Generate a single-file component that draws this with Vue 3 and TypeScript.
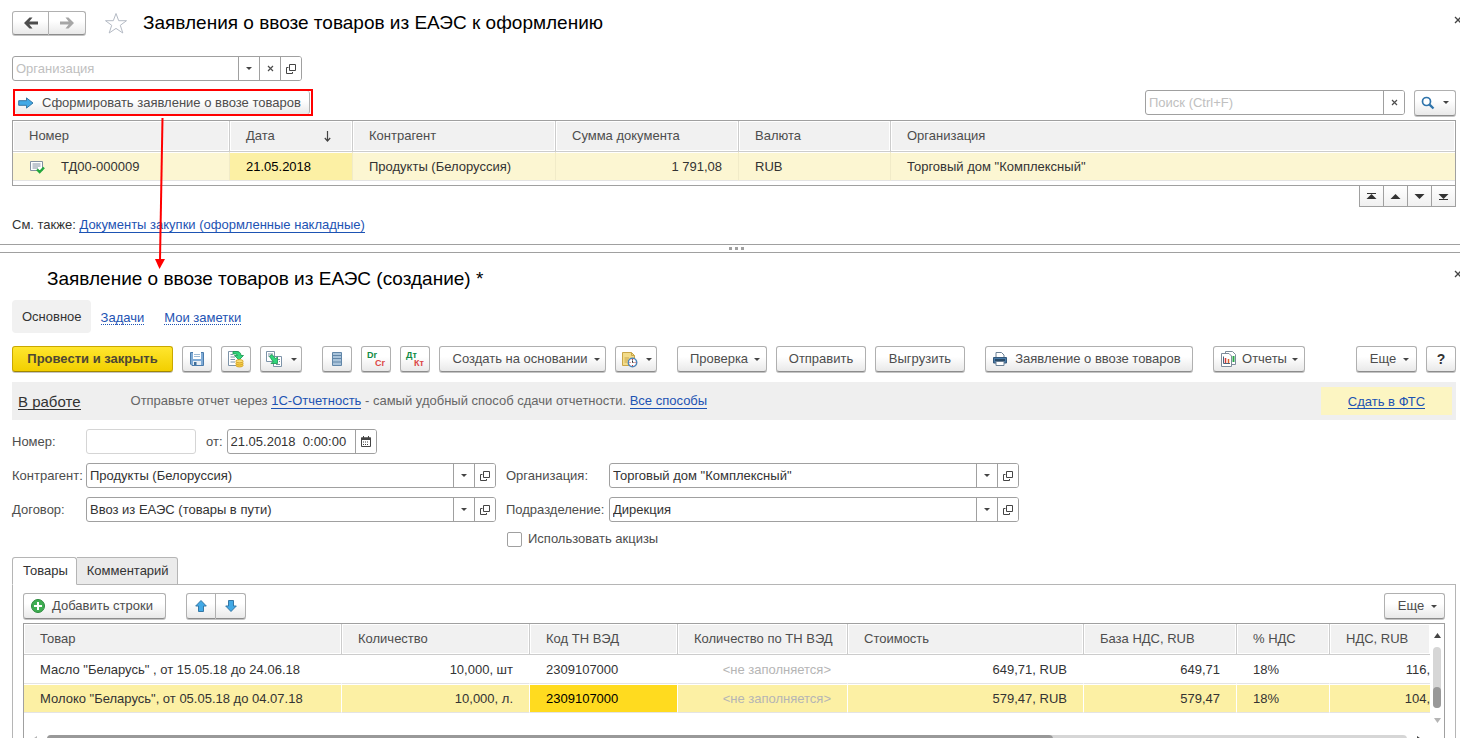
<script setup lang="ts">
import { ref } from 'vue'

interface ImportDoc {
  number: string
  date: string
  partner: string
  sum: string
  currency: string
  company: string
}

interface GoodsLine {
  name: string
  qty: string
  code: string
  cost: string
  base: string
  rate: string
  vat: string
}

const docs: ImportDoc[] = [
  {
    number: 'ТД00-000009',
    date: '21.05.2018',
    partner: 'Продукты (Белоруссия)',
    sum: '1 791,08',
    currency: 'RUB',
    company: 'Торговый дом "Комплексный"',
  },
]

const goods: GoodsLine[] = [
  { name: 'Масло "Беларусь" , от 15.05.18 до 24.06.18', qty: '10,000, шт', code: '2309107000', cost: '649,71, RUB', base: '649,71', rate: '18%', vat: '116,' },
  { name: 'Молоко "Беларусь", от 05.05.18 до 04.07.18', qty: '10,000, л.', code: '2309107000', cost: '579,47, RUB', base: '579,47', rate: '18%', vat: '104,' },
]

const selected = ref(1)
const filterCompany = ref('')
const search = ref('')
const docNumber = ref('')
const docDate = ref('21.05.2018  0:00:00')
const partner = ref('Продукты (Белоруссия)')
const contract = ref('Ввоз из ЕАЭС (товары в пути)')
const company = ref('Торговый дом "Комплексный"')
const department = ref('Дирекция')
const excise = ref(false)
</script>

<template>
  <div class="page">
    <section class="pane top-pane">
      <header class="title-row">
        <div class="btn-pair nav-pair">
          <button type="button" class="btn" aria-label="Назад">
            <svg width="16" height="12" viewBox="0 0 16 12"><path d="M1 6 L6.500 .5 H9.500 L6.300 4.500 H15 V7.500 H6.300 L9.500 11.500 H6.500 Z" fill="#4d4d4d" /></svg>
          </button>
          <button type="button" class="btn" aria-label="Вперед">
            <svg width="16" height="12" viewBox="0 0 16 12"><path d="M15 6 L9.500 .5 H6.500 L9.700 4.500 H1 V7.500 H9.700 L6.500 11.500 H9.500 Z" fill="#a6a6a6" /></svg>
          </button>
        </div>
        <button type="button" class="plain star" aria-label="Избранное">
          <svg width="24" height="23" viewBox="0 0 24 23"><path d="M12 1.500 L14.700 8.700 H22.500 L16.300 13.300 L18.800 21 L12 16.400 L5.200 21 L7.700 13.300 L1.500 8.700 H9.300 Z" fill="#fff" stroke="#b4bac4" /></svg>
        </button>
        <h1>Заявления о ввозе товаров из ЕАЭС к оформлению</h1>
        <button type="button" class="plain close" aria-label="Закрыть">
          <svg width="8" height="8" viewBox="0 0 8 8"><path d="M1 1 L7 7 M7 1 L1 7" stroke="#444" stroke-width="1.300" /></svg>
        </button>
      </header>

      <div class="field filter">
        <input v-model="filterCompany" type="text" placeholder="Организация" aria-label="Организация" />
        <button type="button" aria-label="Выбрать"><i class="caret"></i></button>
        <button type="button" aria-label="Очистить">
          <svg width="7" height="7" viewBox="0 0 7 7"><path d="M1 1 L6 6 M6 1 L1 6" stroke="#4d4d4d" stroke-width="1.200" /></svg>
        </button>
        <button type="button" aria-label="Открыть">
          <svg width="10" height="10" viewBox="0 0 10 10"><path d="M3.500 .5 H9.500 V6.500 H3.500 Z M2.500 3.500 H.5 V9.500 H6.500 V8" fill="none" stroke="#444" /></svg>
        </button>
      </div>

      <div class="command-row">
        <div class="marked">
          <button type="button" class="btn form-btn">
            <svg width="16" height="12" viewBox="0 0 16 12"><path d="M.7 3.700 H8.500 V.9 L15 6 L8.500 11.100 V8.300 H.7 Z" fill="#41a9e6" stroke="#3477a5" /></svg>
            Сформировать заявление о ввозе товаров
          </button>
        </div>
        <div class="field search">
          <input v-model="search" type="text" placeholder="Поиск (Ctrl+F)" aria-label="Поиск" />
          <button type="button" aria-label="Очистить поиск">
            <svg width="7" height="7" viewBox="0 0 7 7"><path d="M1 1 L6 6 M6 1 L1 6" stroke="#4d4d4d" stroke-width="1.200" /></svg>
          </button>
        </div>
        <button type="button" class="btn icon-drop" aria-label="Найти">
          <svg width="14" height="14" viewBox="0 0 14 14"><circle cx="5.500" cy="5.500" r="4" fill="#fff" stroke="#2f74ab" stroke-width="1.700" /><path d="M8.600 8.600 L12.500 12.500" stroke="#2f74ab" stroke-width="2.300" /></svg>
          <i class="caret"></i>
        </button>
      </div>

      <table class="grid docs">
        <colgroup>
          <col class="c-num" /><col class="c-date" /><col class="c-partner" /><col class="c-sum" /><col class="c-cur" /><col />
        </colgroup>
        <thead>
          <tr>
            <th>Номер</th>
            <th>
              <span class="sorted">Дата
                <svg width="7" height="11" viewBox="0 0 7 11"><path d="M3.500 0 V10 M.8 7 L3.500 10 L6.200 7" fill="none" stroke="#444" stroke-width="1.200" /></svg>
              </span>
            </th>
            <th>Контрагент</th>
            <th>Сумма документа</th>
            <th>Валюта</th>
            <th>Организация</th>
          </tr>
        </thead>
        <tbody>
          <tr v-for="d in docs" :key="d.number">
            <td>
              <span class="doc-num">
                <svg width="16" height="14" viewBox="0 0 16 14"><path d="M1.500 1.500 H13.500 V10.500 H1.500 Z" fill="#fff" stroke="#8390a0" /><path d="M3.500 4 H11.500 M3.500 6 H11.500 M3.500 8 H9" stroke="#8390a0" /><path d="M8 9.300 L10.700 12 L15 7.500" fill="none" stroke="#23a83c" stroke-width="2.400" /></svg>
                {{ d.number }}
              </span>
            </td>
            <td class="current">{{ d.date }}</td>
            <td>{{ d.partner }}</td>
            <td class="num">{{ d.sum }}</td>
            <td>{{ d.currency }}</td>
            <td>{{ d.company }}</td>
          </tr>
        </tbody>
      </table>

      <div class="pager">
        <button type="button" aria-label="В начало"><svg width="11" height="7" viewBox="0 0 11 7"><path d="M1 .5 H10" stroke="#333" /><path d="M5.500 1 L10.500 6 H.5 Z" fill="#333" /></svg></button>
        <button type="button" aria-label="Вверх"><svg width="11" height="7" viewBox="0 0 11 7"><path d="M5.500 1 L10.500 6 H.5 Z" fill="#333" /></svg></button>
        <button type="button" aria-label="Вниз"><svg width="11" height="7" viewBox="0 0 11 7"><path d="M5.500 6 L10.500 1 H.5 Z" fill="#333" /></svg></button>
        <button type="button" aria-label="В конец"><svg width="11" height="7" viewBox="0 0 11 7"><path d="M1 6.500 H10" stroke="#333" /><path d="M5.500 6 L10.500 1 H.5 Z" fill="#333" /></svg></button>
      </div>

      <p class="see-also">См. также: <a href="#">Документы закупки (оформленные накладные)</a></p>
    </section>

    <div class="splitter"><i></i><i></i><i></i></div>

    <section class="pane bottom-pane">
      <header class="title-row second">
        <h1>Заявление о ввозе товаров из ЕАЭС (создание) *</h1>
        <button type="button" class="plain close" aria-label="Закрыть">
          <svg width="8" height="8" viewBox="0 0 8 8"><path d="M1 1 L7 7 M7 1 L1 7" stroke="#444" stroke-width="1.300" /></svg>
        </button>
      </header>

      <nav class="sections">
        <span class="here">Основное</span>
        <a href="#">Задачи</a>
        <a href="#">Мои заметки</a>
      </nav>

      <div class="toolbar">
        <div class="group">
          <button type="button" class="btn primary">Провести и закрыть</button>
          <button type="button" class="btn square" aria-label="Записать">
            <svg width="16" height="16" viewBox="0 0 16 16"><path d="M1.500 1.500 H14.500 V14.500 H3 L1.500 13 Z" fill="#7fabd6" stroke="#4a7bab" /><path d="M4 1 H12 V8 H4 Z" fill="#fff" /><path d="M5 3.500 H11 M5 5.500 H11" stroke="#9db9d3" /><path d="M4 10 H12 V14 H4 Z" fill="#e8eef4" /><path d="M5 11 H7.500 V14 H5 Z" fill="#3f6e99" /></svg>
          </button>
          <button type="button" class="btn square" aria-label="Провести">
            <svg width="18" height="18" viewBox="0 0 18 18"><path d="M1.500 1.500 H11.500 V15.500 H1.500 Z" fill="#fff" stroke="#7d93a8" /><path d="M3.500 4.500 H6 M3.500 7 H8 M3.500 9.500 H8 M3.500 12 H8" stroke="#7d93a8" /><path d="M6 1.500 H9 Q14 1.500 14 5.500 H16.500 L12 10 L7.500 5.500 H10.500 Q10.500 4 8.500 4 H6 Z" fill="#31d47b" stroke="#15934b" stroke-width=".8" /><ellipse cx="12.500" cy="15.200" rx="3.700" ry="1.800" fill="#f6cf4b" stroke="#cf9c20" stroke-width=".8" /><ellipse cx="12.500" cy="13.200" rx="3.700" ry="1.800" fill="#f6cf4b" stroke="#cf9c20" stroke-width=".8" /><ellipse cx="12.500" cy="11.200" rx="3.700" ry="1.600" fill="#fbe07a" stroke="#cf9c20" stroke-width=".8" /></svg>
          </button>
          <button type="button" class="btn icon-drop" aria-label="Создать копию">
            <svg width="18" height="18" viewBox="0 0 18 18"><path d="M1.500 1.500 H9.500 V11.500 H1.500 Z" fill="#fff" stroke="#7d93a8" /><path d="M3 4 H8 M3 6 H6" stroke="#7d93a8" /><path d="M8.500 6.500 H16.500 V16.500 H8.500 Z" fill="#fff" stroke="#7d93a8" /><path d="M13 9.500 H15 M14 11.500 H15 M11 14.500 H15" stroke="#7d93a8" /><path d="M4.500 6.500 L7 4.500 L10.500 8.500 L12.500 7 V13.500 H6 L8 11.500 Z" fill="#31d47b" stroke="#15934b" stroke-width=".8" /></svg>
            <i class="caret"></i>
          </button>
        </div>
        <div class="group">
          <button type="button" class="btn square" aria-label="Реестр">
            <svg width="12" height="16" viewBox="0 0 12 16"><path d="M1.500 1.500 H10.500 V14.500 H1.500 Z" fill="#a9c3da" stroke="#6186a8" /><path d="M1.500 4.500 H10.500 M1.500 7.500 H10.500 M1.500 11 H10.500" stroke="#6186a8" /></svg>
          </button>
          <button type="button" class="btn square entries"><span class="debit">Dr</span><span class="credit">Cr</span></button>
          <button type="button" class="btn square entries"><span class="debit">Дт</span><span class="credit">Кт</span></button>
          <button type="button" class="btn w-create">Создать на основании <i class="caret"></i></button>
          <button type="button" class="btn icon-drop" aria-label="Напоминание">
            <svg width="17" height="17" viewBox="0 0 17 17"><path d="M1.500 1.500 H10.500 L13.500 4.500 V14.500 H1.500 Z" fill="#f3dc8a" stroke="#c9a648" /><path d="M10.500 1.500 V4.500 H13.500 M3.500 7 H8 M3.500 9 H7 M3.500 11 H6" fill="none" stroke="#c9a648" /><circle cx="11.500" cy="11.500" r="4.200" fill="#fff" stroke="#4f84b6" stroke-width="1.500" /><path d="M11.500 11.500 V9.500 M11.500 11.500 H12.500" fill="none" stroke="#333" /><path d="M11 8.500 H12 M11 14.500 H12 M8.500 11.500 H9.500 M13.500 11.500 H14.500" stroke="#d43b3b" /></svg>
            <i class="caret"></i>
          </button>
        </div>
        <div class="group">
          <button type="button" class="btn w-90 checks">Проверка <i class="caret"></i></button>
          <button type="button" class="btn w-90">Отправить</button>
          <button type="button" class="btn w-90">Выгрузить</button>
        </div>
        <div class="group">
          <button type="button" class="btn w-print">
            <svg width="16" height="16" viewBox="0 0 16 16"><path d="M4 7 V1.500 H9.500 L12 4 V7" fill="#fff" stroke="#6d8296" /><path d="M1.500 6.500 H14.500 V12 H1.500 Z" fill="#4a7ba8" stroke="#34597c" /><path d="M3 9 H13" stroke="#1f3b55" stroke-width="1.500" /><path d="M4 10.500 H12 V14.500 H4 Z" fill="#fff" stroke="#6d8296" /></svg>
            Заявление о ввозе товаров
          </button>
        </div>
        <div class="group">
          <button type="button" class="btn w-reports">
            <svg width="17" height="18" viewBox="0 0 17 18"><path d="M5.500 1.500 H12.500 L15.500 4.500 V14.500 H5.500 Z" fill="#fff" stroke="#7d8b9a" /><path d="M13.500 6 V12" stroke="#2aa84a" stroke-width="2" /><path d="M1.500 3.500 H9 L11.500 6 V16.500 H1.500 Z" fill="#fff" stroke="#7d8b9a" /><path d="M3.500 6.500 V13.500 H10" fill="none" stroke="#4b637a" /><path d="M5.500 8 V13" stroke="#d53a3a" stroke-width="1.500" /><path d="M8.500 9 V13" stroke="#d9622b" stroke-width="1.500" /></svg>
            Отчеты <i class="caret"></i>
          </button>
        </div>
        <div class="group far">
          <button type="button" class="btn w-more">Еще <i class="caret"></i></button>
          <button type="button" class="btn square help">?</button>
        </div>
      </div>

      <div class="status">
        <a href="#" class="state">В работе</a>
        <p>Отправьте отчет через <a href="#">1С-Отчетность</a> - самый удобный способ сдачи отчетности. <a href="#">Все способы</a></p>
        <div class="submit"><a href="#">Сдать в ФТС</a></div>
      </div>

      <div class="form">
        <label for="f-number">Номер:</label>
        <div class="number-row">
          <div class="field muted number"><input id="f-number" v-model="docNumber" type="text" /></div>
          <label for="f-date">от:</label>
          <div class="field date">
            <input id="f-date" v-model="docDate" type="text" />
            <button type="button" aria-label="Календарь">
              <svg width="10" height="11" viewBox="0 0 10 11"><path d="M.5 2 H9.500 V10.500 H.5 Z" fill="#fff" stroke="#444" /><path d="M0 1.500 H10 V4 H0 Z" fill="#444" /><path d="M2.500 0 V2 M7.500 0 V2" stroke="#444" /><path d="M2 6 H8 M2 8.500 H8" stroke="#444" stroke-dasharray="1 1" /></svg>
            </button>
          </div>
        </div>

        <label for="f-partner">Контрагент:</label>
        <div class="field">
          <input id="f-partner" v-model="partner" type="text" />
          <button type="button" aria-label="Выбрать"><i class="caret"></i></button>
          <button type="button" aria-label="Открыть"><svg width="10" height="10" viewBox="0 0 10 10"><path d="M3.500 .5 H9.500 V6.500 H3.500 Z M2.500 3.500 H.5 V9.500 H6.500 V8" fill="none" stroke="#444" /></svg></button>
        </div>
        <label for="f-company" class="right-label">Организация:</label>
        <div class="field">
          <input id="f-company" v-model="company" type="text" />
          <button type="button" aria-label="Выбрать"><i class="caret"></i></button>
          <button type="button" aria-label="Открыть"><svg width="10" height="10" viewBox="0 0 10 10"><path d="M3.500 .5 H9.500 V6.500 H3.500 Z M2.500 3.500 H.5 V9.500 H6.500 V8" fill="none" stroke="#444" /></svg></button>
        </div>

        <label for="f-contract">Договор:</label>
        <div class="field">
          <input id="f-contract" v-model="contract" type="text" />
          <button type="button" aria-label="Выбрать"><i class="caret"></i></button>
          <button type="button" aria-label="Открыть"><svg width="10" height="10" viewBox="0 0 10 10"><path d="M3.500 .5 H9.500 V6.500 H3.500 Z M2.500 3.500 H.5 V9.500 H6.500 V8" fill="none" stroke="#444" /></svg></button>
        </div>
        <label for="f-department" class="right-label">Подразделение:</label>
        <div class="field">
          <input id="f-department" v-model="department" type="text" />
          <button type="button" aria-label="Выбрать"><i class="caret"></i></button>
          <button type="button" aria-label="Открыть"><svg width="10" height="10" viewBox="0 0 10 10"><path d="M3.500 .5 H9.500 V6.500 H3.500 Z M2.500 3.500 H.5 V9.500 H6.500 V8" fill="none" stroke="#444" /></svg></button>
        </div>

        <label class="check"><input v-model="excise" type="checkbox" />Использовать акцизы</label>
      </div>

      <div class="tabs" role="tablist">
        <button type="button" role="tab" class="tab active" aria-selected="true">Товары</button>
        <button type="button" role="tab" class="tab" aria-selected="false">Комментарий</button>
      </div>

      <div class="panel">
        <div class="panel-bar">
          <button type="button" class="btn w-add">
            <svg width="16" height="16" viewBox="0 0 16 16"><circle cx="8" cy="8" r="6.500" fill="#3fae52" stroke="#2a8a3c" /><path d="M8 4 V12 M4 8 H12" stroke="#fff" stroke-width="2" /></svg>
            Добавить строки
          </button>
          <div class="btn-pair">
            <button type="button" class="btn" aria-label="Выше"><svg width="14" height="14" viewBox="0 0 14 14"><path d="M7 1.500 L12.300 7 H9.500 V12.500 H4.500 V7 H1.700 Z" fill="#41a9e6" stroke="#3477a5" /></svg></button>
            <button type="button" class="btn" aria-label="Ниже"><svg width="14" height="14" viewBox="0 0 14 14"><path d="M7 12.500 L12.300 7 H9.500 V1.500 H4.500 V7 H1.700 Z" fill="#41a9e6" stroke="#3477a5" /></svg></button>
          </div>
          <button type="button" class="btn w-more far">Еще <i class="caret"></i></button>
        </div>

        <div class="frame">
          <div class="viewport">
            <table class="grid goods">
              <colgroup>
                <col class="g-name" /><col class="g-qty" /><col class="g-code" /><col class="g-tn" /><col class="g-cost" /><col class="g-base" /><col class="g-rate" /><col />
              </colgroup>
              <thead>
                <tr>
                  <th>Товар</th>
                  <th>Количество</th>
                  <th>Код ТН ВЭД</th>
                  <th>Количество по ТН ВЭД</th>
                  <th>Стоимость</th>
                  <th>База НДС, RUB</th>
                  <th>% НДС</th>
                  <th>НДС, RUB</th>
                </tr>
              </thead>
              <tbody>
                <tr v-for="(g, i) in goods" :key="g.name" :class="{ selected: i === selected }" @click="selected = i">
                  <td>{{ g.name }}</td>
                  <td class="num">{{ g.qty }}</td>
                  <td class="code">{{ g.code }}</td>
                  <td class="num blank">&lt;не заполняется&gt;</td>
                  <td class="num">{{ g.cost }}</td>
                  <td class="num">{{ g.base }}</td>
                  <td>{{ g.rate }}</td>
                  <td class="num">{{ g.vat }}</td>
                </tr>
              </tbody>
            </table>
          </div>
          <div class="vscroll">
            <svg width="7" height="5" viewBox="0 0 7 5"><path d="M3.500 0 L7 5 H0 Z" fill="#444" /></svg>
            <div class="vtrack"><div class="vthumb"></div></div>
            <svg width="7" height="5" viewBox="0 0 7 5"><path d="M3.500 5 L7 0 H0 Z" fill="#b5b5b5" /></svg>
          </div>
          <div class="hscroll">
            <svg width="5" height="7" viewBox="0 0 5 7"><path d="M0 3.500 L5 0 V7 Z" fill="#b5b5b5" /></svg>
            <div class="htrack"><div class="hthumb"></div></div>
            <svg width="5" height="7" viewBox="0 0 5 7"><path d="M5 3.500 L0 0 V7 Z" fill="#444" /></svg>
          </div>
        </div>
      </div>
    </section>

    <svg class="pointer" width="12" height="152" viewBox="0 0 12 152">
      <path d="M8.500 0 L6 142" stroke="#f00" stroke-width="2" />
      <path d="M1 141 H11 L5.500 151 Z" fill="#f00" />
    </svg>
  </div>
</template>

<style>
body {
  background: #fff;
}
</style>

<style scoped>
.page {
  position: relative;
  height: 100vh;
  overflow: hidden;
  color: #333;
  font: 13px/16px "Liberation Sans", Arial, sans-serif;
}
.page *, .page *::before {
  box-sizing: border-box;
}
button, input {
  margin: 0;
  font: inherit;
  color: inherit;
}
svg {
  display: block;
  flex: none;
}
p {
  margin: 0;
}
a {
  color: #1d53b3;
  text-decoration: none;
  border-bottom: 1px solid currentColor;
}
.pane {
  padding: 0 4px 0 12px;
}
h1 {
  margin: 0;
  font-size: 19px;
  font-weight: 400;
  line-height: 24px;
  color: #000;
}

/* buttons */
.btn {
  display: flex;
  align-items: center;
  justify-content: center;
  height: 26px;
  padding: 0;
  border: 1px solid #b0b0b0;
  border-bottom-color: #8c8c8c;
  border-radius: 3px;
  background: linear-gradient(#fff 40%, #e9e9e9);
  box-shadow: 0 1px 0 #c4c4c4;
  color: #4d4d4d;
  white-space: nowrap;
  flex: none;
}
.plain {
  padding: 0;
  border: 0;
  background: none;
}
.caret {
  flex: none;
  border: 3px solid transparent;
  border-top-color: #444;
  border-bottom: 0;
}
.btn-pair {
  display: flex;
}
.btn-pair .btn {
  width: 30px;
}
.btn-pair .btn:first-child {
  border-radius: 3px 0 0 3px;
}
.btn-pair .btn:last-child {
  border-left: 0;
  border-radius: 0 3px 3px 0;
}
.btn-pair.nav-pair .btn {
  width: 37px;
  height: 24px;
}
.square {
  width: 30px;
}
.icon-drop {
  width: 42px;
  gap: 8px;
}

/* fields */
.field {
  display: flex;
  height: 25px;
  border: 1px solid #a0a0a0;
  border-radius: 3px;
  background: #fff;
  overflow: hidden;
}
.field input {
  flex: 1;
  min-width: 0;
  padding: 0 3px;
  border: 0;
  outline: 0;
  background: none;
  color: #333;
}
.field input::placeholder {
  color: #c0c0c0;
}
.field button {
  display: flex;
  align-items: center;
  justify-content: center;
  flex: none;
  width: 21px;
  padding: 0;
  border: 0;
  border-left: 1px solid #a0a0a0;
  background: #fff;
}
.field.muted {
  border-color: #d5d5d5;
}

/* list form */
.title-row {
  display: flex;
  align-items: center;
  height: 46px;
}
.star {
  margin: 0 15px 0 18px;
}
.close {
  margin-left: auto;
  margin-right: -6px;
  padding-bottom: 6px;
}
.filter {
  width: 290px;
  margin-top: 10px;
}
.command-row {
  display: flex;
  align-items: center;
  height: 27px;
  margin-top: 8px;
}
.marked {
  width: 300px;
  height: 27px;
  margin-left: 1px;
  border: 2px solid #f00;
}
.form-btn {
  justify-content: flex-start;
  width: 295px;
  height: 23px;
  padding-left: 3px;
  gap: 8px;
  border-width: 0 1px 0 0;
  box-shadow: none;
}
.search {
  width: 260px;
  margin-left: auto;
  margin-right: 9px;
}
.grid {
  width: 100%;
  border-collapse: separate;
  border-spacing: 0;
  table-layout: fixed;
}
.grid th, .grid td {
  padding: 0 16px;
  font-weight: 400;
  text-align: left;
  white-space: nowrap;
  overflow: hidden;
}
.grid th {
  height: 31px;
  border-right: 1px solid #ccc;
  border-bottom: 1px solid #ccc;
  background: #f1f1f1;
  box-shadow: inset 0 0 0 1px #fff;
  color: #4d4d4d;
}
.grid td {
  height: 29px;
  padding-top: 2px;
  border-right: 1px solid #fff;
  border-bottom: 1px solid #e4e4e4;
  box-shadow: inset 0 1px 0 #fff;
}
.grid th:last-child, .grid td:last-child {
  border-right: 0;
}
.grid .num {
  text-align: right;
}
.docs {
  margin-top: 4px;
  padding-bottom: 4px;
  border: 1px solid #a0a0a0;
}
.docs td {
  border-right-color: #f1ebc8;
  background: #fcf6d2;
}
.docs td.current {
  background: #fcf0a4;
  color: #000;
}
.c-num { width: 217px; }
.c-date { width: 123px; }
.c-partner { width: 203px; }
.c-sum { width: 183px; }
.c-cur { width: 152px; }
.sorted {
  display: flex;
  align-items: center;
  justify-content: space-between;
  padding-right: 5px;
}
.doc-num {
  display: flex;
  align-items: center;
  gap: 16px;
}
.pager {
  display: flex;
  justify-content: flex-end;
  margin-top: -1px;
}
.pager button {
  display: flex;
  align-items: center;
  justify-content: center;
  width: 24px;
  height: 22px;
  padding: 0;
  border: 1px solid #a0a0a0;
  border-right: 0;
  background: linear-gradient(#fff, #f0f0f0);
}
.pager button:last-child {
  width: 25px;
  border-right: 1px solid #a0a0a0;
}
.see-also {
  margin-top: 10px;
  padding-bottom: 11px;
}
.splitter {
  display: flex;
  align-items: center;
  justify-content: center;
  gap: 3px;
  height: 9px;
  padding-left: 12px;
  border: 1px solid #a0a0a0;
  border-width: 1px 0;
}
.splitter i {
  width: 3px;
  height: 3px;
  background: #a0a0a0;
}

/* document form */
.title-row.second {
  height: 47px;
  padding-left: 35px;
}
.second h1 {
  padding-top: 4px;
}
.sections {
  display: flex;
  align-items: center;
  gap: 20px;
}
.sections .here {
  margin-right: -10px;
  padding: 9px 9px 8px 10px;
  border-radius: 4px;
  background: #f1f1f1;
}
.sections a {
  padding-top: 3px;
  line-height: 12px;
  border-bottom-style: dotted;
}
.toolbar {
  display: flex;
  gap: 20px;
  margin-top: 13px;
}
.group {
  display: flex;
  gap: 9px;
}
.far {
  margin-left: auto;
}
.primary {
  width: 161px;
  border-color: #c9a800;
  border-bottom-color: #a08600;
  background: linear-gradient(#ffe62e, #f2cf00);
  font-weight: 700;
  color: #4d4633;
}
.entries {
  flex-direction: column;
  align-items: stretch;
  padding: 0 5px;
  font-size: 9px;
  font-weight: 700;
  line-height: 8px;
}
.debit {
  text-align: left;
  color: #0f8a43;
}
.credit {
  text-align: right;
  color: #dc4646;
}
.w-create { width: 167px; padding-left: 8px; gap: 7px; }
.w-90 { width: 90px; gap: 6px; }
.checks { padding-left: 6px; }
.w-print { width: 208px; padding-right: 5px; gap: 7px; }
.w-reports { width: 92px; gap: 5px; }
.w-more { width: 61px; padding-left: 6px; gap: 7px; }
.w-add { width: 143px; padding-right: 6px; gap: 6px; }
.help {
  font-size: 14px;
  font-weight: 700;
  color: #333;
}
.status {
  display: flex;
  align-items: center;
  height: 38px;
  margin-top: 10px;
  padding: 0 4px 0 6px;
  background: #efefef;
  color: #666;
}
.status .state {
  margin-right: 50px;
  padding-top: 2px;
  font-size: 15px;
  line-height: 14px;
  color: #333;
}
.submit {
  display: flex;
  align-items: center;
  justify-content: center;
  width: 131px;
  height: 28px;
  margin-left: auto;
  background: #fcf5c2;
}
.submit a {
  padding-top: 2px;
  line-height: 13px;
}
.form {
  display: grid;
  grid-template-columns: 74px 410px 113px 410px;
  align-items: center;
  row-gap: 9px;
  margin-top: 9px;
  color: #4d4d4d;
}
.right-label {
  padding-left: 10px;
}
.number-row {
  display: flex;
  align-items: center;
  grid-column: 2 / -1;
}
.number {
  width: 110px;
  margin-right: 10px;
}
.date {
  width: 150px;
  margin-left: 4px;
}
.date input {
  white-space: pre;
}
.check {
  display: flex;
  align-items: center;
  grid-column: 3 / -1;
  gap: 6px;
  padding-left: 11px;
}
.check input {
  appearance: none;
  width: 15px;
  height: 15px;
  border: 1px solid #a0a0a0;
  border-radius: 2px;
  background: #fff;
}
.check input:checked {
  background: #4d4d4d;
}
.tabs {
  position: relative;
  z-index: 1;
  display: flex;
  margin-top: 10px;
}
.tab {
  height: 28px;
  padding: 0 8px 0 10px;
  border: 1px solid #b5b5b5;
  border-left-width: 0;
  border-radius: 0 3px 0 0;
  background: #ebebeb;
}
.tab.active {
  border-left-width: 1px;
  border-bottom-color: #fff;
  border-radius: 3px 3px 0 0;
  background: #fff;
}
.panel {
  margin-top: -1px;
  padding: 8px 10px 10px;
  border: 1px solid #b5b5b5;
}
.panel-bar {
  display: flex;
}
.panel-bar .btn-pair {
  margin-left: 20px;
}
.frame {
  display: grid;
  grid-template-columns: 1fr 14px;
  margin-top: 4px;
  border: 1px solid #a0a0a0;
}
.viewport {
  min-width: 0;
  overflow: hidden;
}
.goods td {
  background: #fff;
}
.goods td:last-child {
  padding-right: 0;
}
.goods .selected td {
  background: #fcf0a4;
}
.goods .selected .code {
  background: #ffdb1f;
  color: #000;
}
.goods .blank {
  color: #b5b5b5;
}
.g-name { width: 318px; }
.g-qty { width: 188px; }
.g-code { width: 148px; }
.g-tn { width: 170px; }
.g-cost { width: 236px; }
.g-base { width: 153px; }
.g-rate { width: 93px; }
.vscroll {
  display: flex;
  flex-direction: column;
  align-items: center;
  padding-top: 9px;
}
.vtrack {
  display: flex;
  align-items: flex-end;
  width: 8px;
  height: 61px;
  margin: 9px 0 10px;
  border-radius: 4px;
  background: #d6d6d6;
}
.vthumb {
  width: 8px;
  height: 21px;
  border-radius: 4px;
  background: #999;
}
.hscroll {
  display: flex;
  align-items: center;
  gap: 10px;
  padding: 12px 8px 4px;
}
.htrack {
  flex: 1;
  height: 8px;
  border-radius: 4px;
  background: #d6d6d6;
}
.hthumb {
  width: 74%;
  height: 8px;
  border-radius: 4px;
  background: #999;
}
.pointer {
  position: absolute;
  left: 154px;
  top: 118px;
  pointer-events: none;
}
</style>
